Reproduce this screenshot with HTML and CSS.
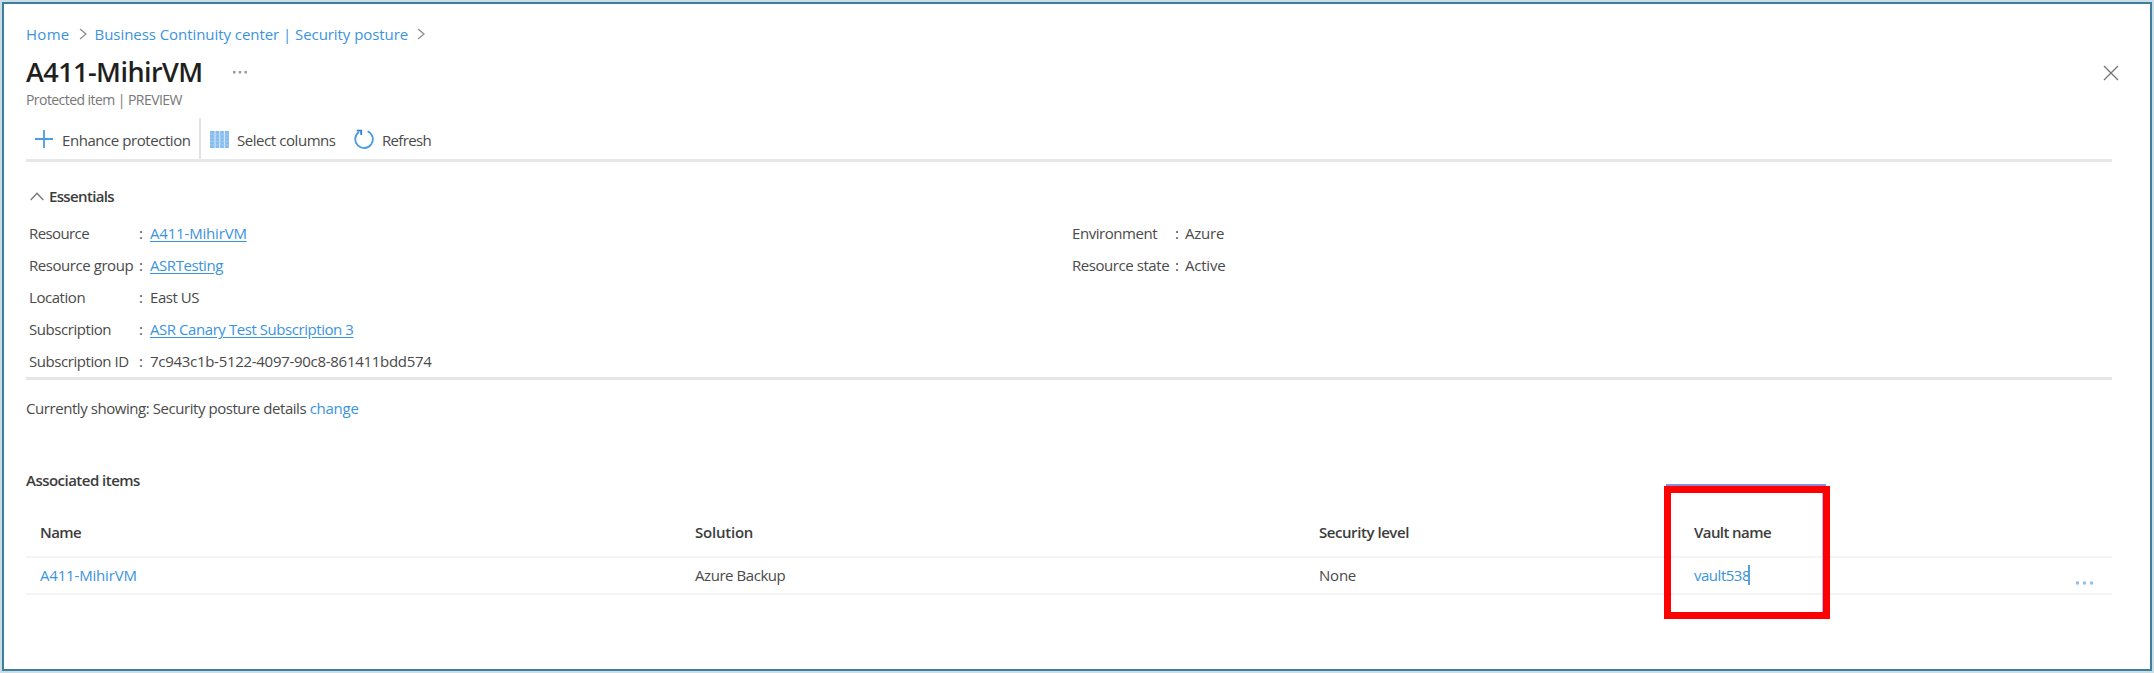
FILE: index.html
```html
<!DOCTYPE html>
<html lang="en">
<head>
<meta charset="utf-8">
<title>A411-MihirVM</title>
<link rel="stylesheet" href="styles.css">
</head>
<body>
<main class="frame">
  <nav class="breadcrumb">
    <a class="home">Home</a>
    <svg class="crumb-sep" width="8" height="12" viewBox="0 0 8 12"><path d="M1 1l6 5-6 5"/></svg>
    <a>Business Continuity center | Security posture</a>
    <svg class="crumb-sep last" width="8" height="12" viewBox="0 0 8 12"><path d="M1 1l6 5-6 5"/></svg>
  </nav>
  <header class="title-row">
    <h1>A411-MihirVM</h1>
    <svg class="title-more" width="14" height="3" viewBox="0 0 14 3"><path d="M0 0h2.5v2.5H0zM5.7 0h2.5v2.5H5.7zM11.4 0h2.5v2.5h-2.5z"/></svg>
    <svg class="close" width="16" height="16" viewBox="0 0 16 16"><path d="M1 1l14 14M15 1L1 15"/></svg>
  </header>
  <div class="subtitle">Protected item | PREVIEW</div>

  <div class="toolbar">
    <div class="tool enhance">
      <svg width="18" height="18" viewBox="0 0 18 18"><path class="plus" d="M9 0v18M0 9h18"/></svg>
      <span>Enhance protection</span>
    </div>
    <div class="tool columns">
      <svg width="19" height="17" viewBox="0 0 19 17">
        <path class="cols" d="M0 0h19v17H0z"/>
        <path class="col-lines" d="M5 0v17M9.7 0v17M14.4 0v17"/>
        <path class="col-rows" d="M0 3.5h19M0 7h19M0 10.5h19M0 14h19"/>
      </svg>
      <span>Select columns</span>
    </div>
    <div class="tool refresh">
      <svg width="20" height="20" viewBox="0 0 20 20"><path class="arc" d="M13.6 2.2A8.8 8.8 0 1 1 5 3"/><path class="arc-head" d="M2.8 1.6h4.4V6"/></svg>
      <span>Refresh</span>
    </div>
  </div>

  <section class="essentials">
    <h2><svg width="14" height="9" viewBox="0 0 14 9"><path d="M.7 8L7 1.2 13.3 8"/></svg>Essentials</h2>
    <div class="props">
      <dl>
        <dt class="tight">Resource</dt><dd class="colon">:</dd><dd><a class="vm">A411-MihirVM</a></dd>
        <dt>Resource group</dt><dd class="colon">:</dd><dd><a>ASRTesting</a></dd>
        <dt>Location</dt><dd class="colon">:</dd><dd>East US</dd>
        <dt>Subscription</dt><dd class="colon">:</dd><dd><a>ASR Canary Test Subscription 3</a></dd>
        <dt>Subscription ID</dt><dd class="colon">:</dd><dd class="guid">7c943c1b-5122-4097-90c8-861411bdd574</dd>
      </dl>
      <dl class="right">
        <dt>Environment</dt><dd class="colon">:</dd><dd class="loose">Azure</dd>
        <dt>Resource state</dt><dd class="colon">:</dd><dd class="loose">Active</dd>
      </dl>
    </div>
  </section>

  <p class="showing">Currently showing: Security posture details <a>change</a></p>

  <h3>Associated items</h3>
  <div class="table">
    <div class="row head">
      <span class="name-h">Name</span><span class="loose">Solution</span><span>Security level</span><span class="vault-h">Vault name</span>
    </div>
    <div class="row">
      <a class="vm">A411-MihirVM</a><span>Azure Backup</span><span class="loose">None</span><a class="vault">vault538<i class="caret"></i></a>
      <svg class="row-more" width="18" height="4" viewBox="0 0 18 4"><path d="M0 .5h3v3H0zM7 .5h3v3H7zM14 .5h3v3h-3z"/></svg>
    </div>
  </div>
  <div class="highlight"></div>
</main>
</body>
</html>
```
FILE: styles.css
```css
* { box-sizing: border-box; margin: 0; }
body {
  height: 673px;
  background: #cbdde6;
  padding: 2px;
  font: 15px/20px "Open Sans", "Noto Sans", sans-serif;
  letter-spacing: -.44px;
  color: #4a4a4a;
  overflow: hidden;
}
a { color: #3b93e0; }
svg { display: block; flex: none; fill: none; }
.frame {
  position: relative;
  height: 669px;
  border: 2px solid #3f7f9b;
  background: #fff;
  padding: 20px 38px 0 22px;
}

.breadcrumb { display: flex; align-items: center; height: 20px; letter-spacing: -.06px; }
.breadcrumb .home { letter-spacing: .3px; }
.crumb-sep { margin: 0 8px 0 9px; stroke: #8d8d8d; stroke-width: 1.3; }

.title-row { display: flex; align-items: center; height: 36px; margin-top: 10px; }
h1 { font-size: 27px; line-height: 36px; font-weight: 600; letter-spacing: -.55px; color: #1f1f1f; }
.title-more { margin-left: 30px; fill: #999; }
.close { margin: 2px -7px 0 auto; stroke: #777; stroke-width: 1.4; }
.subtitle { font-size: 14px; letter-spacing: -.56px; color: #777; }

.toolbar {
  display: flex;
  height: 44px;
  margin-top: 8px;
  border-bottom: 3px solid #e8e8e8;
}
.tool { display: flex; align-items: center; height: 41px; padding-top: 3px; }
.tool span { line-height: 20px; }
.tool svg { margin-top: -2px; }
.enhance { width: 175px; gap: 9px; padding-left: 9px; border-right: 2px solid #e2e2e2; }
.columns { width: 153px; gap: 8px; padding-left: 9px; }
.refresh { gap: 8px; letter-spacing: -.66px; }
.plus { stroke: #4a9be3; stroke-width: 1.8; }
.cols { fill: #86bdf0; }
.col-lines { stroke: #e4f0fc; stroke-width: 1; }
.col-rows { stroke: #a9d0f4; stroke-width: .7; }
.arc { stroke: #4a9be3; stroke-width: 1.8; }
.arc-head { stroke: #2f7fd0; stroke-width: 1.8; }

.essentials { height: 218px; padding: 24px 0 0 3px; border-bottom: 3px solid #e6e6e6; }
h2 { display: flex; align-items: center; gap: 5px; padding-left: 1px; font-size: 15px; line-height: 20px; font-weight: 600; letter-spacing: -.65px; color: #3c3c3c; }
h2 svg { stroke: #777; stroke-width: 1.3; }
.props { display: flex; padding-top: 11px; }
dl { display: grid; flex: none; grid-template-columns: 110px 11px auto; grid-auto-rows: 32px; width: 1043px; line-height: 32px; align-content: start; }
dl.right { grid-template-columns: 103px 10px auto; }
dl a { text-decoration: underline; text-underline-offset: 2px; }
.vm { letter-spacing: -.18px; }
.tight { letter-spacing: -.6px; }
.loose { letter-spacing: -.22px; }
.guid { letter-spacing: -.29px; }

.showing { margin-top: 18px; }
.showing a { letter-spacing: -.25px; }
h3 { margin-top: 52px; font-size: 15px; line-height: 20px; font-weight: 600; letter-spacing: -.52px; color: #3c3c3c; }
.table { padding-top: 18px; }
.row {
  display: grid;
  grid-template-columns: 655px 624px 375px 382px auto;
  align-items: center;
  height: 37px;
  padding: 0 0 2px 14px;
  border-bottom: 2px solid #f4f4f2;
}
.head { height: 50px; padding-bottom: 0; font-weight: 600; color: #3c3c3c; }
.name-h { letter-spacing: -.6px; }
.vault-h { letter-spacing: -.58px; }
.vault { position: relative; letter-spacing: -.48px; }
.caret { position: absolute; left: 54px; top: 0; width: 1.5px; height: 20px; background: #5a9fd8; }
.row-more { margin-top: 16px; fill: #8dc0ef; }

/* callout drawn over the vault column */
.highlight {
  position: absolute;
  left: 1660px;
  top: 482px;
  width: 166px;
  height: 133px;
  border: 7px solid #f00;
}
.highlight::before {
  content: "";
  position: absolute;
  left: -5px;
  top: -9px;
  width: 160px;
  height: 2px;
  background: #8a8ae0;
}
.highlight::after {
  content: "";
  position: absolute;
  right: 0;
  top: 0;
  width: 1px;
  height: 119px;
  background: #b4b4f0;
}
```
